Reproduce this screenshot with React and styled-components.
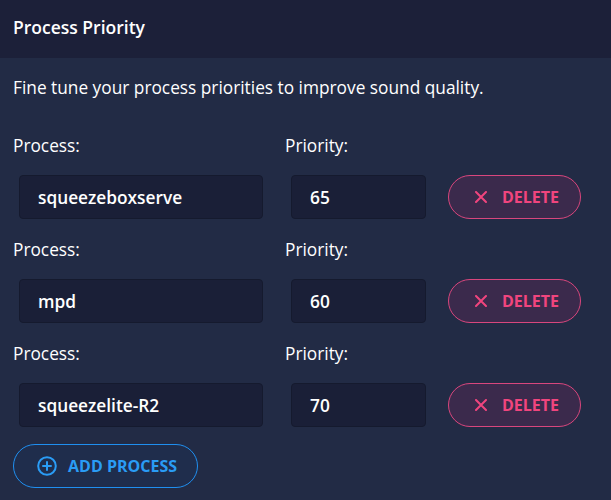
import styled, { createGlobalStyle } from "styled-components";

const GlobalStyle = createGlobalStyle`
  html, body {
    margin: 0;
    padding: 0;
    background: #222b45;
  }
  body {
    font-family: "Open Sans", "Noto Sans", sans-serif;
    color: #ffffff;
  }
`;

const Card = styled.div`
  width: 611px;
  height: 500px;
  background: #222b45;
  overflow: hidden;
`;

const Header = styled.div`
  height: 58px;
  background: #1c2039;
  display: flex;
  align-items: center;
  padding: 0 13px 4px;
  box-sizing: border-box;
  font-size: 17.5px;
  font-weight: 600;
  color: #ffffff;
`;

const Body = styled.div`
  padding: 18px 13px 0;
`;

const Description = styled.p`
  margin: 0 0 34px;
  font-size: 17.3px;
  line-height: 24px;
  color: #ffffff;
`;

const List = styled.div`
  display: flex;
  flex-direction: column;
  gap: 19px;
`;

const Row = styled.div`
  display: grid;
  grid-template-columns: 272px 163px auto;
  align-items: end;
`;

const Field = styled.div`
  display: flex;
  flex-direction: column;
`;

const Label = styled.label`
  font-size: 17.3px;
  line-height: 24px;
  margin-bottom: 17px;
`;

const Input = styled.div`
  height: 44px;
  box-sizing: border-box;
  margin-left: 6px;
  width: ${(p) => p.$width}px;
  background: #1a1f37;
  border: 1px solid #151a2e;
  border-radius: 4px;
  display: flex;
  align-items: center;
  padding: 0 18px;
  font-size: 17.3px;
  font-weight: 600;
  color: #ffffff;
`;

const PillButton = styled.button`
  height: 44px;
  box-sizing: border-box;
  border-radius: 22px;
  border: 1px solid ${(p) => p.$border};
  background: ${(p) => p.$bg};
  color: ${(p) => p.$color};
  display: inline-flex;
  align-items: center;
  white-space: nowrap;
  font-family: "Open Sans", "Noto Sans", sans-serif;
  font-size: 16px;
  font-weight: 700;
  text-transform: uppercase;
  cursor: pointer;
`;

const DeleteButton = styled(PillButton)`
  width: 133px;
  padding: 0 0 0 26px;
  gap: 15px;
`;

const AddButton = styled(PillButton)`
  width: 185px;
  margin-top: 17px;
  padding: 0 0 0 23px;
  gap: 11px;
`;

const processes = [
  { name: "squeezeboxserve", priority: 65 },
  { name: "mpd", priority: 60 },
  { name: "squeezelite-R2", priority: 70 },
];

const CrossIcon = () => (
  <svg width="12" height="12" viewBox="0 0 12 12">
    <path d="M1 1 L11 11 M11 1 L1 11" stroke="currentColor" strokeWidth="2" strokeLinecap="round" />
  </svg>
);

const PlusCircle = () => (
  <svg width="20" height="20" viewBox="0 0 20 20" fill="none">
    <circle cx="10" cy="10" r="8.8" stroke="currentColor" strokeWidth="2" />
    <path d="M10 6 V14 M6 10 H14" stroke="currentColor" strokeWidth="2" strokeLinecap="round" />
  </svg>
);

export default function App() {
  return (
    <Card>
      <GlobalStyle />
      <Header>Process Priority</Header>
      <Body>
        <Description>Fine tune your process priorities to improve sound quality.</Description>
        <List>
          {processes.map((p) => (
            <Row key={p.name}>
              <Field>
                <Label>Process:</Label>
                <Input $width={244}>{p.name}</Input>
              </Field>
              <Field>
                <Label>Priority:</Label>
                <Input $width={135}>{p.priority}</Input>
              </Field>
              <DeleteButton $border="#d9467d" $bg="#3b2a4c" $color="#f0457e">
                <CrossIcon />
                Delete
              </DeleteButton>
            </Row>
          ))}
        </List>
        <AddButton $border="#1f8ff0" $bg="#1f2d4c" $color="#2a9cf5">
          <PlusCircle />
          Add Process
        </AddButton>
      </Body>
    </Card>
  );
}
